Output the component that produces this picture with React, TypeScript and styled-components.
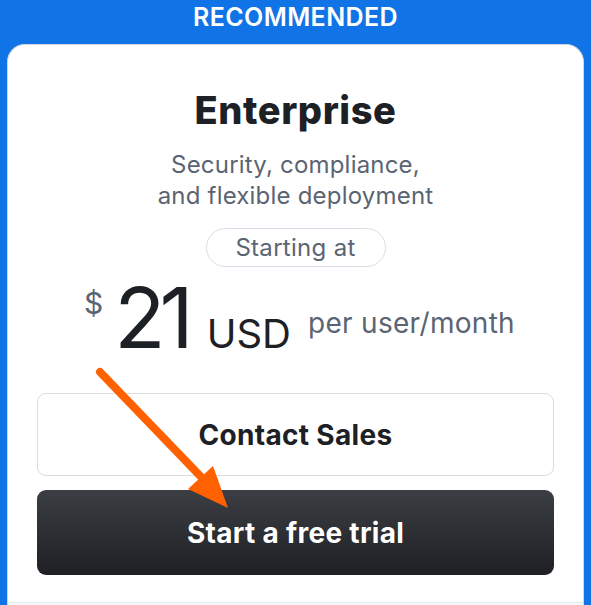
import * as React from 'react';
import styled, { createGlobalStyle } from 'styled-components';

const GlobalStyle = createGlobalStyle`
  html, body {
    margin: 0;
    padding: 0;
    background: #1174e6;
    font-family: Inter, "Noto Sans", Arial, sans-serif;
    overflow: hidden;
  }
`;

const Page = styled.div`
  width: 591px;
  height: 605px;
  overflow: hidden;
  background: #1174e6;
`;

const Banner = styled.div`
  height: 44px;
  display: flex;
  justify-content: center;
  padding-top: 2px;
  box-sizing: border-box;
  color: #fff;
  font-size: 25px;
  font-weight: 600;
  letter-spacing: 0.4px;
  line-height: 30px;
`;

const Card = styled.div`
  position: relative;
  margin: 0 7px;
  background: #fff;
  border: 1px solid #cfd7e3;
  border-bottom: none;
  border-radius: 18px 18px 0 0;
  display: flex;
  flex-direction: column;
  align-items: center;
  padding: 42px 29px 0;
`;

const Title = styled.h1`
  margin: 0;
  font-size: 38px;
  line-height: 46px;
  font-weight: 800;
  letter-spacing: 0.6px;
  color: #1d2024;
`;

const Subtitle = styled.p`
  margin: 16px 0 0;
  font-size: 24px;
  line-height: 31px;
  letter-spacing: 0.2px;
  color: #5b6472;
  text-align: center;
`;

const Pill = styled.div`
  margin-top: 17px;
  height: 39px;
  width: 180px;
  box-sizing: border-box;
  border: 1px solid #d8dee8;
  border-radius: 20px;
  display: flex;
  align-items: center;
  justify-content: center;
  font-size: 24px;
  letter-spacing: 0.3px;
  color: #5b6472;
`;

const PriceRow = styled.div`
  margin-top: 9px;
  margin-left: 8px;
  display: flex;
  align-items: flex-start;
  color: #1d2024;
`;

const Currency = styled.span`
  font-size: 30px;
  line-height: 36px;
  color: #5b6472;
  margin-top: 9px;
  margin-right: 11px;
`;

const Amount = styled.span`
  font-size: 84px;
  line-height: 84px;
  font-weight: 400;
  letter-spacing: -6px;
`;

const Unit = styled.span`
  font-size: 40px;
  line-height: 40px;
  margin-top: 38px;
  margin-left: 19px;
`;

const Per = styled.span`
  font-size: 28px;
  line-height: 34px;
  color: #5b6472;
  margin-top: 30px;
  margin-left: 17px;
  letter-spacing: 0.3px;
`;

const Button = styled.button<{ $dark?: boolean }>`
  width: 100%;
  height: ${(p) => (p.$dark ? '85px' : '83px')};
  box-sizing: border-box;
  border-radius: 9px;
  font-family: inherit;
  font-size: 28px;
  font-weight: 700;
  letter-spacing: 0.3px;
  cursor: pointer;
  color: ${(p) => (p.$dark ? '#fff' : '#1d2024')};
  border: ${(p) => (p.$dark ? 'none' : '1.5px solid #dcdcdc')};
  background: ${(p) =>
    p.$dark ? 'linear-gradient(180deg, #3b3e43 0%, #1e2024 100%)' : '#fff'};
`;

const Buttons = styled.div`
  width: 100%;
  margin-top: 33px;
  display: flex;
  flex-direction: column;
  gap: 14px;
`;

const Footer = styled.div`
  margin-top: 27px;
  width: calc(100% + 58px);
  height: 20px;
  border-top: 1px solid #e6e8ec;
  background: #f7f8fa;
`;

const Arrow = styled.svg`
  position: absolute;
  left: 0;
  top: 0;
  pointer-events: none;
`;

export default function App() {
  return (
    <Page>
      <GlobalStyle />
      <Banner>RECOMMENDED</Banner>
      <Card>
        <Title>Enterprise</Title>
        <Subtitle>
          Security, compliance,
          <br />
          and flexible deployment
        </Subtitle>
        <Pill>Starting at</Pill>
        <PriceRow>
          <Currency>$</Currency>
          <Amount>21</Amount>
          <Unit>USD</Unit>
          <Per>per user/month</Per>
        </PriceRow>
        <Buttons>
          <Button>Contact Sales</Button>
          <Button $dark>Start a free trial</Button>
        </Buttons>
        <Footer />
        <Arrow width="577" height="560" viewBox="0 0 577 560">
          <g transform="translate(-7 -45)">
            <line x1="99" y1="372" x2="205" y2="482" stroke="#ff6000" strokeWidth="8" strokeLinecap="round" />
            <polygon points="227,508 187,489 212,466" fill="#ff6000" />
          </g>
        </Arrow>
      </Card>
    </Page>
  );
}
